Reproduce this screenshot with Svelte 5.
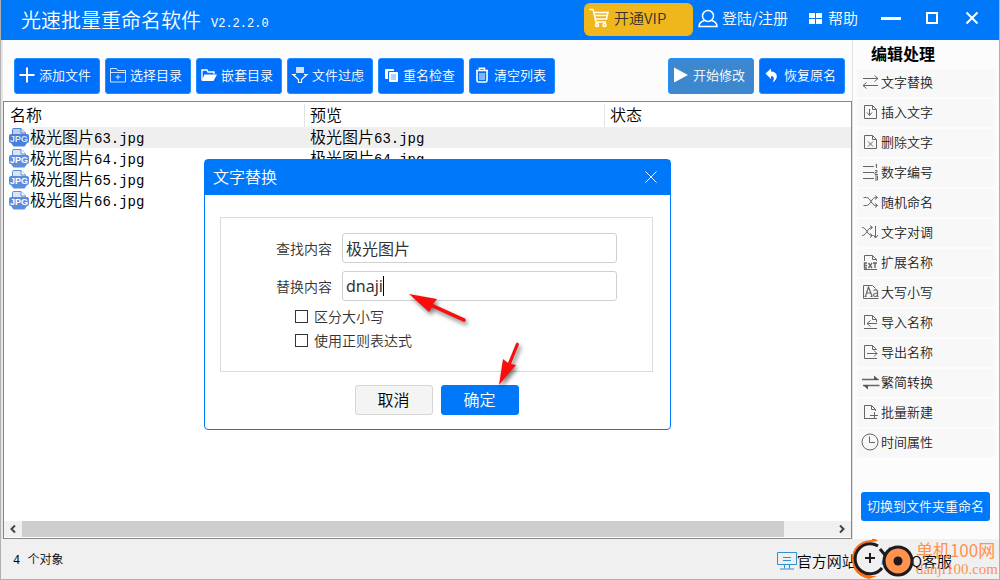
<script>
	const tools = [
		{ icon: 'plus', label: '添加文件' },
		{ icon: 'folder', label: '选择目录' },
		{ icon: 'open', label: '嵌套目录' },
		{ icon: 'filter', label: '文件过虑' },
		{ icon: 'copy', label: '重名检查' },
		{ icon: 'trash', label: '清空列表' },
	];

	const edits = [
		{ icon: 'replace', label: '文字替换' },
		{ icon: 'insert', label: '插入文字' },
		{ icon: 'remove', label: '删除文字' },
		{ icon: 'number', label: '数字编号' },
		{ icon: 'shuffle', label: '随机命名' },
		{ icon: 'swap', label: '文字对调' },
		{ icon: 'ext', label: '扩展名称' },
		{ icon: 'case', label: '大写小写' },
		{ icon: 'import', label: '导入名称' },
		{ icon: 'export', label: '导出名称' },
		{ icon: 'convert', label: '繁简转换' },
		{ icon: 'create', label: '批量新建' },
		{ icon: 'clock', label: '时间属性' },
	];

	const files = [63, 64, 65, 66].map((n) => ({ stem: '极光图片', tail: `${n}.jpg` }));

	let selected = $state(0);
	let find = $state('极光图片');
	let replacement = $state('dnaji');
	let matchCase = $state(false);
	let useRegex = $state(false);
</script>

{#snippet toolIcon(name)}
	<svg class="tool-icon" viewBox="0 0 16 16" aria-hidden="true">
		{#if name === 'plus'}
			<path d="M8 0.5v15M0.5 8h15" stroke-width="2" />
		{:else if name === 'folder'}
			<path d="M0.5 15V1.5h6l1 2h8V15zM0.5 5.5h15M8 7.5v5M5.5 10h5" opacity="0.8" />
		{:else if name === 'open'}
			<path d="M1 13V3h5l1 2h6v2" stroke-width="1.4" />
			<path class="solid" d="M3.5 7.5H16L12.5 14H0.5z" />
		{:else if name === 'filter'}
			<path class="solid" d="M4 0h8v6H4z" opacity="0.8" />
			<path d="M4 7.5H1L6.5 12.500v3h3v-3L15 7.500h-3" stroke-width="1.2" />
		{:else if name === 'copy'}
			<path class="solid" d="M3 2h7q1 0 1 1v1H6q-1 0-1 1v7H3q-1 0-1-1V3q0-1 1-1zM7 5h7q1 0 1 1v8q0 1-1 1H7q-1 0-1-1V6q0-1 1-1z" />
			<path d="M8 8h5M8 10h5M8 12h5" stroke="#5ea4ff" />
		{:else if name === 'trash'}
			<path d="M2 3.5h12M5.5 3V1.2h5V3M3 4v9.5Q3 15 4.5 15h7Q13 15 13 13.5V4" stroke-width="1.6" />
			<path d="M6 6v7M8 6v7M10 6v7" />
		{:else if name === 'play'}
			<path class="solid" d="M1 0.5L15 8L1 15.5z" />
		{:else if name === 'undo'}
			<path class="solid" d="M1.5 6.5L7 1.5V4.5C14 4.5 15 12 8.5 15.5C10.5 12 10.5 9 7 9V12z" />
		{/if}
	</svg>
{/snippet}

{#snippet editIcon(name)}
	<svg class="edit-icon" viewBox="0 0 16 16" aria-hidden="true">
		{#if name === 'replace'}
			<path d="M0 4.5h15M11.5 1.5L15 4.5L11.5 7.5M15 11.5H0M3.5 8.5L0 11.5L3.5 14.5" />
		{:else if name === 'insert'}
			<path d="M1.5 1.5h8l4 4v9h-12zM9.5 1.5v4h4M6.5 5v6M4 8.5L6.5 11.5L9 8.5" />
		{:else if name === 'remove'}
			<path d="M1.5 1.5h8l4 4v9h-12zM9.5 1.5v4h4M5 7.5l5 5M10 7.5l-5 5" />
		{:else if name === 'number'}
			<path d="M0 2.5h11M0 8.5h11M0 14.5h11M13.5 0v4M12.5 1h1M12 6.5h2v2h-2v2h3M12 12h2.5v4H12M12 14h2.5" />
		{:else if name === 'shuffle'}
			<path d="M0.5 3.5h3c4 0 5 8 9 8h2M0.5 11.5h3c4 0 5-8 9-8h2M12 1.5l2.5 2L12 5.5M12 9.5l2.5 2L12 13.5" />
		{:else if name === 'swap'}
			<path d="M-1 3.5c5 0 5 8 10 8M-1 11.5c5 0 5-8 10-8M7 1.5l2.5 2L7 5.5M7 9.5l2.5 2L7 13.5M12.5 2v12M10.5 11l2 3L15 11" />
		{:else if name === 'ext'}
			<path d="M1.5 7V1.5h8l4 4V7M9.5 1.5v4h4M1 15.5h13" />
			<path d="M4 9H1.5v5H4M1.5 11.5H4M5.5 9l3.5 5M9 9l-3.5 5M10 9h4M12 9v5" stroke-width="1.4" />
		{:else if name === 'case'}
			<path d="M0.500 14.500V1.500h9l3 3M0.500 14.500h15" />
			<path d="M2.5 12L5.500 3L9 12M3.5 9h4.500M1.500 12.500h2M7.500 12.500h2M10.500 6.500c2-1.500 4-.5 4 1v5h1M14.500 9c-3 0-4 .5-4 2c0 2 3 2 4 0" stroke-width="1.2" />
		{:else if name === 'import'}
			<path d="M1.5 11V1.5h8l4 4V8M9.5 1.5v4h4M1 14.5h13M14 9.5H4M7.5 6.5L4 9.5L7.5 12.5" />
		{:else if name === 'export'}
			<path d="M13.5 5.5l-4-4h-8v13H14M9.5 1.5v4h4M4 9.5h10M11 6.5L14 9.5L11 12.5" />
		{:else if name === 'convert'}
			<path d="M-1 5.5H15.5M16.5 11.5H0" stroke-width="1.4" />
			<path class="solid" d="M11 1.5L16 6H11zM0 11H5V15.5z" />
		{:else if name === 'create'}
			<path d="M12.5 7V5.5l-4-4h-7v13h6M8.5 1.5v4h4M7 11.5h8M11.5 8v7M1 14.5h13" />
		{:else if name === 'clock'}
			<circle cx="7" cy="8" r="8" />
			<path d="M6.5 2.5v6H12" />
		{/if}
	</svg>
{/snippet}

{#snippet jpgIcon(active)}
	<svg class="jpg" class:active viewBox="0 0 20 19" aria-hidden="true">
		<path d="M3.5 7V1.5Q3.5 0.5 5 0.5H12L16.5 5V7" fill="#d9e6f8" stroke="#5c8fd8" />
		<path d="M12 0.5V5h4.5" fill="#fff" stroke="#5c8fd8" />
		<path d="M2 6H18Q20 6 20 8V13Q20 15 18 15L15.5 18.5H4.5L2 15Q0 15 0 13V8Q0 6 2 6z" fill="#5b8ddf" />
		<text x="10" y="14">JPG</text>
	</svg>
{/snippet}

{#snippet fileName(file)}
	<span class="file">{file.stem}<span class="tail">{file.tail}</span></span>
{/snippet}

<div class="window">
	<header>
		<h1>光速批量重命名软件</h1>
		<span class="version">V2.2.2.0</span>
		<button class="vip">
			<svg width="20" height="20" viewBox="0 0 20 20" aria-hidden="true">
				<path d="M0.5 1.5H4L7 14H17M4.5 4.5H19L17.5 11H6.5M5.5 7.5H18" />
				<circle cx="8" cy="17" r="1.5" /><circle cx="15.5" cy="17" r="1.5" />
			</svg>
			开通VIP
		</button>
		<button class="head-link login">
			<svg width="20" height="20" viewBox="0 0 20 20" aria-hidden="true">
				<circle cx="10" cy="8" r="5.5" />
				<path d="M6.5 12.5Q1 14 1 18.5H19Q19 14 13.5 12.5" />
			</svg>
			登陆/注册
		</button>
		<button class="head-link help">
			<svg width="13" height="12" viewBox="0 0 13 12" aria-hidden="true">
				<path d="M0 1h6v5H0zM7 1h6v5H7zM0 7h6v5H0zM7 7h6v5H7z" fill="#fff" stroke="none" />
			</svg>
			帮助
		</button>
		<div class="controls">
			<button aria-label="最小化">
				<svg width="20" height="14" viewBox="0 0 20 14"><path d="M0 7.5h20" stroke-width="3" /></svg>
			</button>
			<button aria-label="最大化">
				<svg width="12" height="12" viewBox="0 0 12 12"><path d="M1 1h10v10H1z" stroke-width="2" /></svg>
			</button>
			<button aria-label="关闭">
				<svg width="12" height="12" viewBox="0 0 12 12"><path d="M0.5 0.5l11 11M11.5 0.5l-11 11" stroke-width="2" /></svg>
			</button>
		</div>
	</header>

	<div class="content">
		<main>
			<div class="toolbar">
				{#each tools as tool}
					<button class="tool">{@render toolIcon(tool.icon)}{tool.label}</button>
				{/each}
				<button class="tool start">{@render toolIcon('play')}开始修改</button>
				<button class="tool">{@render toolIcon('undo')}恢复原名</button>
			</div>

			<div class="list">
				<table>
					<colgroup><col class="wide" /><col class="wide" /><col /></colgroup>
					<thead>
						<tr><th>名称</th><th>预览</th><th>状态</th></tr>
					</thead>
					<tbody>
						{#each files as file, i}
							<tr class:selected={i === selected} onclick={() => (selected = i)}>
								<td>
									<div class="name">{@render jpgIcon(i === selected)}{@render fileName(file)}</div>
								</td>
								<td><div class="name">{@render fileName(file)}</div></td>
								<td></td>
							</tr>
						{/each}
					</tbody>
				</table>
				<div class="scrollbar">
					<button aria-label="向左滚动">
						<svg width="8" height="8" viewBox="0 0 8 8"><path d="M6 0.5L2.5 4L6 7.5" /></svg>
					</button>
					<div class="track"><div class="thumb"></div></div>
					<button aria-label="向右滚动">
						<svg width="8" height="8" viewBox="0 0 8 8"><path d="M2 0.5L5.5 4L2 7.5" /></svg>
					</button>
				</div>
			</div>
		</main>

		<aside>
			<h2>编辑处理</h2>
			<nav>
				{#each edits as edit}
					<button>{@render editIcon(edit.icon)}{edit.label}</button>
				{/each}
			</nav>
			<button class="switch">切换到文件夹重命名</button>
		</aside>
	</div>

	<footer>
		<span class="count">4 个对象</span>
		<a class="site" href="#site">
			<svg width="20" height="20" viewBox="0 0 20 20" aria-hidden="true">
				<path d="M0.5 2.5h19v12H0.5zM7.5 14.5v4M12.5 14.5v4M3 19h14M6 7.5h8M6 10.5h8" />
			</svg>
			官方网站
		</a>
		<a class="service" href="#service">
			<svg width="20" height="20" viewBox="0 0 20 20" aria-hidden="true">
				<path d="M10 -1C5 -1 4 4 4.5 7C2 10 1 14 2 15C3 15 3.5 14 4 13.5C4.5 16 3 17 4 18.5H16C17 17 15.5 16 16 13.5C16.5 14 17 15 18 15C19 14 18 10 15.5 7C16 4 15 -1 10 -1z" fill="#4a9fdc" stroke="none" />
				<path d="M4 9Q10 12 16 9" stroke="#fff" />
			</svg>
			QQ客服
		</a>
	</footer>

	<div class="watermark">
		<svg width="65" height="42" viewBox="0 0 65 42" aria-hidden="true">
			<path d="M21 2C8 2 1 11 1 21C1 32 8 39 18 41L26 38C12 38 5 31 5 21C5 11 11 5 20 4L27 3Q24 0 21 1z" fill="#ff6d12" />
			<path d="M27 8A15 15 0 1 0 31 30" fill="none" stroke="#20191d" stroke-width="3" />
			<path d="M19 15v10M14 20h10" fill="none" stroke="#20191d" stroke-width="2" />
			<path d="M29 11l5 6M40 10l-4 5" stroke="#20191d" stroke-width="3" />
			<circle cx="47" cy="23" r="14" fill="#ff924c" stroke="#20191d" stroke-width="3" />
			<circle cx="47" cy="23" r="4.5" fill="#20191d" />
		</svg>
		<div>
			<span class="mark-name">单机100网</span>
			<span class="mark-url">danji100.com</span>
		</div>
	</div>

	<form class="dialog" onsubmit={(e) => e.preventDefault()}>
		<div class="dialog-title">
			<span>文字替换</span>
			<button type="button" aria-label="关闭对话框">
				<svg width="12" height="12" viewBox="0 0 12 12"><path d="M0.5 0.5l11 11M11.5 0.5l-11 11" /></svg>
			</button>
		</div>
		<div class="panel">
			<div class="fields">
				<label for="find">查找内容</label>
				<input id="find" type="text" bind:value={find} />
				<label for="replacement">替换内容</label>
				<div class="editing">
					<input id="replacement" type="text" bind:value={replacement} />
					<span class="caret"></span>
				</div>
			</div>
			<label class="check"><input type="checkbox" bind:checked={matchCase} />区分大小写</label>
			<label class="check"><input type="checkbox" bind:checked={useRegex} />使用正则表达式</label>
		</div>
		<div class="actions">
			<button type="button">取消</button>
			<button type="submit" class="ok">确定</button>
		</div>
		<svg class="pointers" width="130" height="110" viewBox="400 285 130 110" aria-hidden="true">
			<path d="M409 294L437 299L433 304L465 318.5Q467 321 464 322L432 307.5L429 312z" />
			<path d="M499 385L503 359L508 363L516 343.5Q518 341 519 344.5L511 364L516 365z" />
		</svg>
	</form>
</div>

<style>
	:global(body) {
		margin: 0;
	}

	.window {
		position: relative;
		display: flex;
		flex-direction: column;
		box-sizing: border-box;
		min-height: 100vh;
		border: 1px solid #b0b0b0;
		border-top: 0;
		background: #fcfcfc;
		font-family: 'Noto Sans CJK SC', sans-serif;
		font-size: 13px;
		font-weight: 350;
		color: #000;
	}

	button,
	input {
		box-sizing: border-box;
		margin: 0;
		padding: 0;
		border: 0;
		font: inherit;
		color: inherit;
	}

	button {
		display: flex;
		align-items: center;
		background: none;
		line-height: 20px;
		white-space: nowrap;
	}

	a {
		color: inherit;
		text-decoration: none;
	}

	svg {
		flex: none;
		overflow: visible;
		fill: none;
	}

	header {
		display: flex;
		align-items: center;
		height: 40px;
		padding-left: 20px;
		background: #0078fa;
		color: #fff;
		font-size: 15px;
	}

	header svg {
		stroke: #fff;
		stroke-width: 1.5;
	}

	h1 {
		margin: 0;
		font-size: 20px;
		font-weight: 350;
		line-height: 40px;
		white-space: nowrap;
	}

	.version {
		padding: 8px 0 0 10px;
		font-family: 'Liberation Mono', monospace;
		font-size: 12px;
	}

	.vip {
		gap: 5px;
		width: 109px;
		height: 33px;
		margin: 0 5px 2px auto;
		padding: 0 5px 2px;
		border-radius: 6px;
		background: #f0b71c;
		color: #333;
	}

	.head-link {
		gap: 4px;
		padding-bottom: 4px;
	}

	.help {
		gap: 6px;
		margin-left: 21px;
	}

	.controls {
		display: flex;
		align-items: center;
		gap: 25px;
		padding: 0 21px 4px 23px;
	}

	.controls button:last-child {
		margin-left: 3px;
	}

	.content {
		display: flex;
		flex: 1;
	}

	main {
		display: flex;
		flex: 1;
		flex-direction: column;
		min-width: 0;
		border-left: 2px solid #e6e6e6;
	}

	.toolbar {
		display: flex;
		gap: 5px;
		padding: 18px 7px 7px 11px;
	}

	.tool {
		gap: 4px;
		width: 86px;
		height: 36px;
		padding: 0 4px 2px;
		border: 1px solid #1e90ff;
		border-radius: 3px;
		background: #006ffc;
		color: #fff;
	}

	.tool.start {
		margin-left: auto;
		background: #3c87cd;
	}

	.tool-icon {
		width: 16px;
		height: 16px;
		stroke: #fff;
	}

	.tool-icon .solid {
		fill: #fff;
		stroke: none;
	}

	.list {
		display: flex;
		flex: 1;
		flex-direction: column;
		justify-content: space-between;
		padding-bottom: 1px;
		border: 1px solid #828790;
		background: #fff;
	}

	table {
		width: 100%;
		border-collapse: collapse;
		table-layout: fixed;
		font-size: 16px;
		line-height: 21px;
	}

	.wide {
		width: 300px;
	}

	th {
		height: 25px;
		padding: 0 6px;
		font-weight: 350;
		text-align: left;
	}

	th + th {
		background: linear-gradient(#e2e2e2, #e2e2e2) left bottom / 1px 23px no-repeat;
	}

	td {
		height: 21px;
		padding: 0 6px;
	}

	td:first-child {
		padding-left: 5px;
	}

	.selected td {
		background: #efefef;
	}

	.selected td:first-child {
		background: linear-gradient(to right, #fff 26px, #efefef 26px);
	}

	.name {
		display: flex;
		align-items: center;
		height: 21px;
	}

	.file {
		padding-bottom: 2px;
		line-height: 19px;
		white-space: nowrap;
	}

	.tail {
		font-family: 'Liberation Mono', monospace;
		font-size: 14px;
		line-height: 1;
	}

	.jpg {
		width: 20px;
		height: 19px;
		margin-right: 1px;
	}

	.jpg.active {
		filter: saturate(1.3) brightness(0.9);
	}

	.jpg text {
		fill: #fff;
		font-family: 'Liberation Sans', sans-serif;
		font-size: 9px;
		font-weight: 700;
		text-anchor: middle;
	}

	.scrollbar {
		display: flex;
		height: 16px;
		background: #f0f0f0;
	}

	.scrollbar button {
		justify-content: center;
		width: 18px;
		stroke: #444;
		stroke-width: 2;
	}

	.track {
		flex: 1;
	}

	.thumb {
		width: 94%;
		height: 100%;
		background: #cdcdcd;
	}

	aside {
		display: flex;
		flex-direction: column;
		width: 138px;
		padding: 0 4px;
		border-left: 1px solid #e2e2e2;
	}

	h2 {
		margin: 0;
		padding: 0 0 2px 14px;
		font-size: 16px;
		line-height: 27px;
	}

	nav {
		display: grid;
		gap: 2px;
	}

	nav button {
		gap: 2px;
		height: 28px;
		padding: 0 6px 2px;
		background: #f8f8f8;
		color: #222;
	}

	.edit-icon {
		width: 16px;
		height: 16px;
		stroke: #666;
	}

	.edit-icon .solid {
		fill: #555;
		stroke: none;
	}

	.switch {
		justify-content: center;
		height: 29px;
		margin: auto 5px 18px 4px;
		padding-bottom: 2px;
		border-radius: 3px;
		background: #0078fa;
		color: #fff;
	}

	footer {
		display: flex;
		align-items: center;
		height: 40px;
		padding: 0 47px 0 12px;
		background: #f0f0f0;
		font-size: 15px;
	}

	footer a {
		display: flex;
		align-items: center;
		margin-top: 2px;
	}

	footer svg {
		stroke: #2f8fd0;
	}

	.count {
		margin-right: auto;
		font-family: 'Liberation Mono', 'Noto Sans CJK SC', monospace;
		font-size: 12px;
	}

	.service {
		margin-left: 23px;
	}

	.watermark {
		position: absolute;
		right: 1px;
		bottom: -1px;
		display: flex;
		color: #ff924c;
	}

	.watermark div {
		display: flex;
		flex-direction: column;
		padding-top: 1px;
	}

	.mark-name {
		font-size: 17px;
		font-weight: 400;
		line-height: 22px;
	}

	.mark-url {
		font-family: 'Liberation Serif', serif;
		font-size: 15px;
		line-height: 16px;
	}

	.dialog {
		position: absolute;
		top: 159px;
		left: 203px;
		box-sizing: border-box;
		width: 467px;
		border: 1px solid #0078fa;
		border-radius: 4px;
		background: #fff;
		color: #333;
		font-size: 14px;
	}

	.dialog-title {
		display: flex;
		align-items: center;
		justify-content: space-between;
		height: 35px;
		padding: 0 13px 0 8px;
		background: #0078fa;
		color: #fff;
		font-size: 16px;
		line-height: 20px;
	}

	.dialog-title span {
		padding-bottom: 4px;
	}

	.dialog-title button {
		padding-bottom: 2px;
	}

	.dialog-title svg {
		stroke: #fff;
	}

	.panel {
		margin: 22px 17px 0 15px;
		padding: 15px 35px 19px 0;
		border: 1px solid #dcdcdc;
	}

	.fields {
		display: grid;
		grid-template-columns: 111px 1fr;
		gap: 8px 10px;
		align-items: center;
		margin-bottom: 3px;
	}

	.fields label {
		text-align: right;
	}

	.fields input {
		display: block;
		width: 100%;
		height: 30px;
		padding: 0 3px;
		border: 1px solid #d0d0d0;
		border-radius: 3px;
		background: #fff;
		font-family: 'Noto Sans', 'Noto Sans CJK SC', sans-serif;
		font-size: 16px;
		font-weight: 400;
	}

	.editing {
		position: relative;
	}

	.caret {
		position: absolute;
		top: 5px;
		left: 41px;
		width: 1px;
		height: 20px;
		background: #000;
	}

	.check {
		display: flex;
		align-items: center;
		gap: 6px;
		height: 24px;
		padding-left: 74px;
	}

	.check input {
		width: 13px;
		height: 13px;
		border: 1px solid #333;
		background: #fff;
		appearance: none;
	}

	.check input:checked {
		background: #0078fa;
	}

	.actions {
		display: flex;
		justify-content: center;
		gap: 8px;
		padding: 13px 2px 14px 0;
	}

	.actions button {
		justify-content: center;
		width: 78px;
		height: 30px;
		padding-bottom: 2px;
		border: 1px solid #d5d5d5;
		border-radius: 3px;
		background: #f4f4f4;
		color: #000;
		font-size: 16px;
	}

	.actions .ok {
		border-color: #0078fa;
		background: #0078fa;
		color: #fff;
	}

	.pointers {
		position: absolute;
		top: 125px;
		left: 195px;
		fill: #fb0d0d;
		filter: drop-shadow(2px 3px 2px rgb(0 0 0 / 50%));
		pointer-events: none;
	}
</style>
